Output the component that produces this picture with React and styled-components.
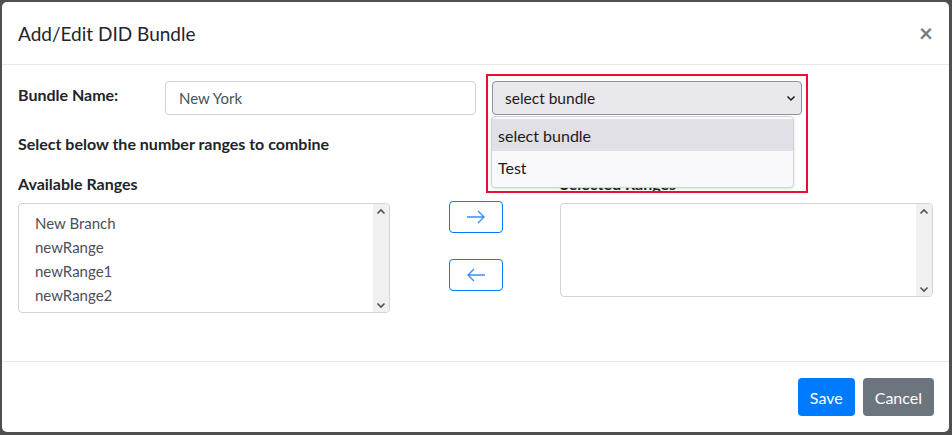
import React from "react";
import styled, { createGlobalStyle } from "styled-components";

const Global = createGlobalStyle`
  html, body { margin: 0; padding: 0; }
  body {
    background: #4f4f4f;
    font-family: Lato, "Noto Sans", sans-serif;
    color: #212529;
    width: 952px;
    height: 435px;
    overflow: hidden;
  }
  * { box-sizing: border-box; }
`;

const Modal = styled.div`
  position: relative;
  margin: 2px 0 0 2px;
  width: 947px;
  height: 430px;
  background: #fff;
  border-radius: 5px;
  display: flex;
  flex-direction: column;
`;

const Header = styled.div`
  display: flex;
  align-items: center;
  justify-content: space-between;
  height: 63px;
  padding: 0 16px;
  border-bottom: 1px solid #e6e8eb;
`;

const Title = styled.h5`
  margin: 0;
  font-size: 19px;
  font-weight: 400;
  color: #212529;
`;

const Close = styled.span`
  font-size: 24px;
  font-weight: 700;
  color: #7b7b7b;
  line-height: 1;
`;

const Body = styled.div`
  flex: 1;
  padding: 16px 16px 0 16px;
  display: flex;
  flex-direction: column;
`;

const Row = styled.div`
  display: grid;
  grid-template-columns: 131px 311px 310px;
  column-gap: 16px;
  align-items: center;
`;

const Label = styled.div`
  font-weight: 700;
  font-size: 16px;
  color: #212529;
  align-self: start;
  padding-top: 4px;
`;

const Input = styled.div`
  height: 34px;
  border: 1px solid #ced4da;
  border-radius: 4px;
  padding: 0 13px;
  display: flex;
  align-items: center;
  font-size: 15px;
  color: #495057;
`;

const Select = styled.div`
  height: 34px;
  border: 1px solid #8f8f9d;
  border-radius: 4px;
  background: #e9e9ed;
  padding: 0 5px 0 12px;
  display: flex;
  align-items: center;
  justify-content: space-between;
  font-size: 15.5px;
  color: #1b1b1b;
`;

const Heading = styled.div`
  font-weight: 700;
  font-size: 16px;
  line-height: 19px;
  color: #212529;
  margin-top: ${(p) => p.$top || 0}px;
`;

const Lists = styled.div`
  display: grid;
  grid-template-columns: 372px 1fr 373px;
  margin-top: 21px;
  align-items: start;
`;

const ListCol = styled.div`
  display: flex;
  flex-direction: column;
  gap: 10px;
`;

const ListBox = styled.div`
  height: ${(p) => p.$h}px;
  border: 1px solid #ced4da;
  border-radius: 4px;
  display: flex;
  overflow: hidden;
`;

const Items = styled.div`
  flex: 1;
  padding: 7px 16px;
  font-size: 15px;
  color: #495057;
  line-height: 24px;
`;

const Scrollbar = styled.div`
  width: 16px;
  background: #f0f0f0;
  display: flex;
  flex-direction: column;
  justify-content: space-between;
  align-items: center;
  padding: 4px 0 3px;
`;

const Buttons = styled.div`
  display: flex;
  flex-direction: column;
  align-items: center;
  gap: 26px;
  padding-top: 27px;
`;

const ArrowBtn = styled.button`
  width: 54px;
  height: 32px;
  border: 1px solid #007bff;
  border-radius: 4px;
  background: #fff;
  display: flex;
  align-items: center;
  justify-content: center;
  padding: 0;
  margin-left: 2px;
`;

const Footer = styled.div`
  height: 71px;
  border-top: 1px solid #e6e8eb;
  display: flex;
  justify-content: flex-end;
  align-items: center;
  gap: 8px;
  padding: 0 15px;
`;

const Btn = styled.button`
  height: 38px;
  border: none;
  border-radius: 4px;
  padding: 0 12px;
  font-family: inherit;
  font-size: 16px;
  color: #fff;
  background: ${(p) => (p.$variant === "primary" ? "#007bff" : "#6c757d")};
`;

const Highlight = styled.div`
  position: absolute;
  left: 484px;
  top: 72px;
  width: 322px;
  height: 119px;
  border: 2px solid #e8102c;
  pointer-events: none;
`;

const Dropdown = styled.div`
  position: absolute;
  left: 489px;
  top: 114px;
  width: 303px;
  padding: 2px 0 4px;
  background: #f9f9fb;
  border: 1px solid #d4d4d8;
  border-radius: 4px;
  box-shadow: 0 1px 3px rgba(0, 0, 0, 0.12);
`;

const Option = styled.div`
  height: 32px;
  display: flex;
  align-items: center;
  padding: 0 6px;
  font-size: 16px;
  color: #1b1b1b;
  background: ${(p) => (p.$active ? "#e0e0e6" : "#f9f9fb")};
`;

const Chevron = ({ up }) => (
  <svg width="10" height="7" viewBox="0 0 10 7">
    <path
      d={up ? "M1.5 5.5 L5 2 L8.5 5.5" : "M1.5 1.5 L5 5 L8.5 1.5"}
      fill="none"
      stroke="#505050"
      strokeWidth="1.6"
    />
  </svg>
);

const SelectChevron = () => (
  <svg width="10" height="7" viewBox="0 0 10 7">
    <path d="M1.5 1.5 L5 5 L8.5 1.5" fill="none" stroke="#1b1b1b" strokeWidth="1.5" />
  </svg>
);

const Arrow = ({ left }) => (
  <svg width="20" height="14" viewBox="0 0 20 14">
    {left ? (
      <path d="M19 7 H2 M8 1 L2 7 L8 13" fill="none" stroke="#3d8ff5" strokeWidth="1.4" />
    ) : (
      <path d="M1 7 H18 M12 1 L18 7 L12 13" fill="none" stroke="#3d8ff5" strokeWidth="1.4" />
    )}
  </svg>
);

const Scroll = () => (
  <Scrollbar>
    <Chevron up />
    <Chevron />
  </Scrollbar>
);

export default function App() {
  return (
    <>
      <Global />
      <Modal>
        <Header>
          <Title>Add/Edit DID Bundle</Title>
          <Close>×</Close>
        </Header>
        <Body>
          <Row>
            <Label>Bundle Name:</Label>
            <Input>New York</Input>
            <Select>
              <span>select bundle</span>
              <SelectChevron />
            </Select>
          </Row>
          <Heading $top={19}>Select below the number ranges to combine</Heading>
          <Lists>
            <ListCol>
              <Heading>Available Ranges</Heading>
              <ListBox $h={110}>
                <Items>
                  <div>New Branch</div>
                  <div>newRange</div>
                  <div>newRange1</div>
                  <div>newRange2</div>
                </Items>
                <Scroll />
              </ListBox>
            </ListCol>
            <Buttons>
              <ArrowBtn>
                <Arrow />
              </ArrowBtn>
              <ArrowBtn>
                <Arrow left />
              </ArrowBtn>
            </Buttons>
            <ListCol>
              <Heading>Selected Ranges</Heading>
              <ListBox $h={94}>
                <Items />
                <Scroll />
              </ListBox>
            </ListCol>
          </Lists>
        </Body>
        <Footer>
          <Btn $variant="primary">Save</Btn>
          <Btn>Cancel</Btn>
        </Footer>
        <Highlight />
        <Dropdown>
          <Option $active>select bundle</Option>
          <Option>Test</Option>
        </Dropdown>
      </Modal>
    </>
  );
}
